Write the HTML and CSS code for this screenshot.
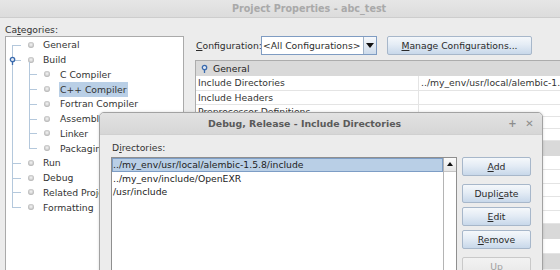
FILE: index.html
```html
<!DOCTYPE html>
<html>
<head>
    <title>Project Properties - abc_test</title>
    <meta charset="UTF-8">
    <link rel="stylesheet" href="styles.css">
</head>
<body>
    <div class="window">
        <div class="titlebar"><span class="title">Project Properties - abc_test</span></div>
        <div class="main">
            <div class="categories">
                <div class="label">Ca<u>t</u>egories:</div>
                <div class="tree">
                    <ul class="tree-list">
                        <li><div class="node"><span class="dot"></span>General</div></li>
                        <li>
                            <div class="node">
                                <svg class="pin" width="9" height="10" viewBox="0 0 9 10"><line x1="4.5" y1="5.5" x2="4.5" y2="9" stroke="#3a6aad" stroke-width="1.3"/><circle cx="4.5" cy="3.5" r="2.2" fill="#dfe8f4" stroke="#3a6aad" stroke-width="1.3"/></svg>
                                <span class="dot"></span>Build
                            </div>
                            <ul class="tree-sub">
                                <li><div class="node"><span class="dot"></span>C Compiler</div></li>
                                <li><div class="node"><span class="dot"></span><span class="sel">C++ Compiler</span></div></li>
                                <li><div class="node"><span class="dot"></span>Fortran Compiler</div></li>
                                <li><div class="node"><span class="dot"></span>Assembler</div></li>
                                <li><div class="node"><span class="dot"></span>Linker</div></li>
                                <li><div class="node"><span class="dot"></span>Packaging</div></li>
                            </ul>
                        </li>
                        <li><div class="node"><span class="dot"></span>Run</div></li>
                        <li><div class="node"><span class="dot"></span>Debug</div></li>
                        <li><div class="node"><span class="dot"></span>Related Projects</div></li>
                        <li><div class="node"><span class="dot"></span>Formatting</div></li>
                    </ul>
                </div>
            </div>
            <div class="props">
                <div class="config-row">
                    <span class="config-label"><u>C</u>onfiguration:</span>
                    <div class="combo">
                        <span class="combo-text">&lt;All Configurations&gt;</span>
                        <span class="combo-arrow"></span>
                    </div>
                    <button class="btn manage"><u>M</u>anage Configurations...</button>
                </div>
                <div class="sheet">
                    <div class="row head"><span class="cell"><svg class="pin" width="9" height="10" viewBox="0 0 9 10"><line x1="4.5" y1="5.5" x2="4.5" y2="9" stroke="#3a6aad" stroke-width="1.3"/><circle cx="4.5" cy="3.5" r="2.2" fill="#dfe8f4" stroke="#3a6aad" stroke-width="1.3"/></svg>General</span></div>
                    <div class="row"><span class="cell">Include Directories</span><span class="cell">../my_env/usr/local/alembic-1.5.8/include;../my_env/include/OpenEXR</span></div>
                    <div class="row"><span class="cell">Include Headers</span><span class="cell"></span></div>
                    <div class="row sm"><span class="cell">Preprocessor Definitions</span><span class="cell"></span></div>
                    <div class="row sm"><span class="cell"></span><span class="cell"></span></div>
                    <div class="row sm"><span class="cell"></span><span class="cell"></span></div>
                    <div class="row head"><span class="cell"></span></div>
                    <div class="row xs"><span class="cell"></span><span class="cell"></span></div>
                    <div class="row xs"><span class="cell"></span><span class="cell"></span></div>
                    <div class="row xs"><span class="cell"></span><span class="cell"></span></div>
                    <div class="row xs"><span class="cell"></span><span class="cell"></span></div>
                    <div class="row xs"><span class="cell"></span><span class="cell"></span></div>
                    <div class="row head"><span class="cell"></span></div>
                    <div class="row"><span class="cell"></span><span class="cell"></span></div>
                    <div class="row head"><span class="cell"></span></div>
                </div>
            </div>
        </div>

        <div class="dialog">
            <div class="dialog-title">
                <span class="dialog-name">Debug, Release - Include Directories</span>
                <span class="dialog-ctl">+</span>
                <span class="dialog-ctl">&#x2715;</span>
            </div>
            <div class="dialog-body">
                <div class="label dir-label">D<u>i</u>rectories:</div>
                <div class="dir-row">
                    <div class="list">
                        <div class="items">
                            <div class="item selected">../my_env/usr/local/alembic-1.5.8/include</div>
                            <div class="item">../my_env/include/OpenEXR</div>
                            <div class="item">/usr/include</div>
                        </div>
                        <div class="scrollbar"><span class="scroll-up"></span></div>
                    </div>
                    <div class="actions">
                        <button class="btn"><u>A</u>dd</button>
                        <button class="btn gap">Dupli<u>c</u>ate</button>
                        <button class="btn"><u>E</u>dit</button>
                        <button class="btn"><u>R</u>emove</button>
                        <button class="btn gap" disabled><u>U</u>p</button>
                    </div>
                </div>
            </div>
        </div>
    </div>
</body>
</html>
```

FILE: styles.css
```css
body {
    margin: 0;
    font-family: "DejaVu Sans", sans-serif;
    font-size: 9.25px;
    color: #2c2c2c;
    background: #ececec;
}
.window {
    position: relative;
    width: 560px;
    height: 270px;
    overflow: hidden;
    background: #ececec;
}
.titlebar {
    height: 17px;
    border-bottom: 1px solid #cdcdcd;
    background: linear-gradient(#e6e6e6, #dcdcdc);
    display: flex;
    align-items: center;
    padding-left: 232px;
}
.title {
    font-weight: bold;
    font-size: 9.6px;
    color: #a9a9a9;
}
.main {
    display: flex;
}
.label {
    height: 12px;
    line-height: 12px;
    color: #333;
}
.categories {
    flex: none;
    margin-left: 5px;
    width: 179px;
    padding-top: 6px;
}
.tree {
    background: #fff;
    border: 1px solid #aaaaaa;
    height: 240px;
}
.tree-list, .tree-sub {
    list-style: none;
    margin: 0;
    padding: 0;
    position: relative;
}
.tree-list {
    padding-top: 0.6px;
}
.tree-list::before {
    content: "";
    position: absolute;
    left: 6px;
    top: 8px;
    bottom: 7.4px;
    border-left: 1px solid #b4c8dc;
}
.tree-sub::before {
    content: "";
    position: absolute;
    left: 23px;
    top: -5px;
    bottom: 7.4px;
    border-left: 1px solid #b4c8dc;
}
.node {
    position: relative;
    height: 14.75px;
    display: flex;
    align-items: center;
    padding-left: 22px;
    white-space: nowrap;
    color: #333;
}
.node::before {
    content: "";
    position: absolute;
    left: 6px;
    width: 9px;
    top: 50%;
    border-top: 1px solid #b4c8dc;
}
.tree-sub .node {
    padding-left: 38px;
}
.tree-sub .node::before {
    left: 23px;
    width: 8px;
}
.dot {
    width: 6px;
    height: 6px;
    border-radius: 50%;
    margin-right: 9px;
    flex: none;
    background: radial-gradient(circle at 50% 45%, #f6f6f6 0, #cfcfcf 45%, #8d8d8d 100%);
}
.tree-sub .dot {
    margin-right: 10px;
}
.node .pin {
    position: absolute;
    left: 2px;
    top: 3.5px;
}
.sel {
    background: #b9cfe6;
    padding: 0 1px;
    margin-left: -1px;
    line-height: 15px;
}
.props {
    flex: none;
    margin-left: 11px;
    padding-top: 18px;
}
.config-row {
    display: flex;
    align-items: center;
    height: 19px;
    white-space: nowrap;
}
.config-label {
    margin-left: 1px;
    width: 65px;
}
.combo {
    width: 116px;
    height: 19px;
    box-sizing: border-box;
    display: flex;
    border: 1px solid #7f9cc2;
    background: #fff;
}
.combo-text {
    flex: 1;
    padding-left: 1px;
    line-height: 17px;
}
.combo-arrow {
    width: 12px;
    border-left: 1px solid #9fb1c6;
    background: linear-gradient(#f6f8fb, #cddbeb);
    position: relative;
}
.combo-arrow::after {
    content: "";
    position: absolute;
    left: 2px;
    top: 6px;
    border-left: 4px solid transparent;
    border-right: 4px solid transparent;
    border-top: 5px solid #111;
}
.btn {
    font-family: inherit;
    font-size: inherit;
    color: #2a2a2a;
    height: 19px;
    padding: 0;
    border: 1px solid #a7b7ca;
    border-radius: 2px;
    background: linear-gradient(#f5f8fb, #e4ecf5 45%, #c8d8ea);
    display: block;
}
.btn:disabled {
    color: #a0a0a0;
    border-color: #c9c9c9;
    background: linear-gradient(#f2f2f2, #e8e8e8);
}
.manage {
    margin-left: 10px;
    width: 145px;
}
.sheet {
    margin-top: 5px;
    width: 380px;
    border-top: 1px solid #acacac;
    border-left: 1px solid #acacac;
    background: #fff;
}
.row {
    display: grid;
    grid-template-columns: 222px 1fr;
    height: 14.7px;
    box-sizing: border-box;
    border-bottom: 1px solid #e4e4e4;
    white-space: nowrap;
    overflow: hidden;
}
.row.sm {
    height: 12px;
}
.row.xs {
    height: 13.6px;
}
.row.head {
    height: 15px;
    background: #d9d9d9;
    border-bottom: none;
}
.cell {
    padding-left: 2px;
    line-height: 13.5px;
    overflow: hidden;
    color: #333;
}
.cell + .cell {
    border-left: 1px solid #e4e4e4;
}
.row.head .cell {
    display: flex;
    align-items: center;
    padding-left: 4px;
    color: #222;
}
.row.head .pin {
    margin-right: 4px;
}

/* include directories dialog */
.dialog {
    position: absolute;
    left: 99px;
    top: 112px;
    width: 444px;
    height: 170px;
    box-sizing: border-box;
    border: 1px solid #a2a2a2;
    border-radius: 5px 5px 0 0;
    background: #ececec;
    box-shadow: 0 0 3px rgba(0, 0, 0, 0.15);
}
.dialog-title {
    height: 21px;
    display: flex;
    align-items: center;
    border-radius: 4px 4px 0 0;
    background: linear-gradient(#e2e2e2, #d6d6d6);
    border-bottom: 1px solid #d0d0d0;
    padding-left: 108px;
}
.dialog-name {
    font-weight: bold;
    font-size: 9.4px;
    color: #5a5a5a;
}
.dialog-ctl {
    color: #8c8c8c;
    font-weight: bold;
    font-size: 10px;
    width: 17px;
    text-align: center;
}
.dialog-name + .dialog-ctl {
    margin-left: auto;
}
.dialog-ctl:last-child {
    margin-right: 4px;
}
.dialog-body {
    padding: 7px 0 0 11px;
}
.dir-label {
    margin-left: 1px;
}
.dir-row {
    display: flex;
    margin-top: 3px;
}
.list {
    width: 346px;
    height: 120px;
    box-sizing: border-box;
    border: 1px solid #8f8f8f;
    background: #fff;
    display: flex;
}
.items {
    flex: 1;
}
.item {
    height: 13.4px;
    line-height: 13.4px;
    padding-left: 1px;
    white-space: nowrap;
    color: #222;
}
.item.selected {
    height: 14px;
    line-height: 12px;
    box-sizing: border-box;
    background: #b9cfe6;
    border: 1px solid #7d9dc5;
    padding-left: 0;
}
.scrollbar {
    width: 12px;
    border-left: 1px solid #b4b4b4;
}
.scroll-up {
    display: block;
    height: 13px;
    border-bottom: 1px solid #c4c4c4;
    background: linear-gradient(#fbfbfb, #e6e6e6);
    position: relative;
}
.scroll-up::after {
    content: "";
    position: absolute;
    left: 3px;
    top: 4px;
    border-left: 3px solid transparent;
    border-right: 3px solid transparent;
    border-bottom: 4px solid #111;
}
.actions {
    margin-left: 5px;
    width: 69px;
    display: flex;
    flex-direction: column;
    gap: 4px;
}
.actions .btn {
    width: 69px;
}
.actions .btn.gap {
    margin-top: 4px;
}
```
